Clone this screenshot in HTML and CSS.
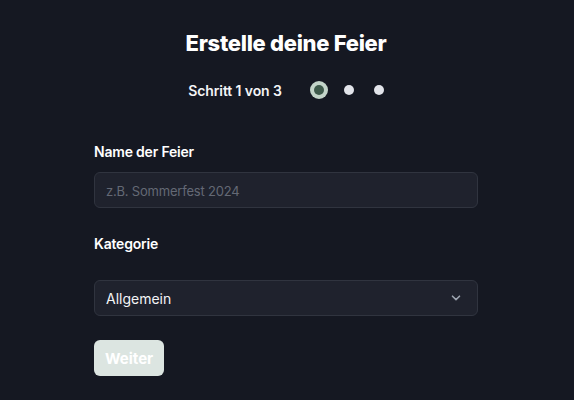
FILE: index.html
```html
<!DOCTYPE html>
<html lang="de">
<head>
  <meta charset="UTF-8" />
  <title>Erstelle deine Feier</title>
  <link rel="stylesheet" href="styles.css">
</head>
<body>

<div class="wizard">
  <h1>Erstelle deine Feier</h1>

  <div class="steps">
    <span class="step-text">Schritt 1 von 3</span>
    <div class="dots">
      <span class="dot active"></span>
      <span class="dot"></span>
      <span class="dot"></span>
    </div>
  </div>

  <div class="form">
    <label for="name">Name der Feier</label>
    <input type="text" id="name" placeholder="z.B. Sommerfest 2024">

    <label for="kategorie" class="label-select">Kategorie</label>
    <div class="select-wrap">
      <select id="kategorie">
        <option>Allgemein</option>
        <option>Geburtstag</option>
        <option>Hochzeit</option>
      </select>
      <svg class="chevron" width="10" height="6" viewBox="0 0 10 6">
        <path d="M1.5 1.2 L5 4.6 L8.5 1.2" fill="none" stroke="#9ca3af" stroke-width="1.6" stroke-linecap="round" stroke-linejoin="round"/>
      </svg>
    </div>

    <button class="next">Weiter</button>
  </div>
</div>

</body>
</html>
```

FILE: styles.css
```css
body {
  margin: 0;
  padding-right: 2px;
  background-color: #151822;
  font-family: Inter, "Noto Sans", sans-serif;
  color: #f3f4f6;
}

.wizard {
  width: 384px;
  margin: 0 auto;
  padding-top: 29px;
}

h1 {
  margin: 0;
  text-align: center;
  font-size: 22px;
  line-height: 28px;
  font-weight: 800;
  letter-spacing: -0.3px;
  color: #ffffff;
}

.steps {
  display: flex;
  justify-content: center;
  align-items: center;
  gap: 32px;
  margin-top: 23px;
  height: 20px;
}

.step-text {
  font-size: 14px;
  font-weight: 600;
  letter-spacing: -0.1px;
  color: #f3f4f6;
}

.dots {
  display: flex;
  align-items: center;
  gap: 20px;
}

.dot {
  width: 10px;
  height: 10px;
  border-radius: 50%;
  background: #e2e4ea;
}

.dot.active {
  background: #3e5a4b;
  box-shadow: 0 0 0 4px #c3d4c9;
}

.form {
  margin-top: 42px;
  display: flex;
  flex-direction: column;
}

label {
  font-size: 14px;
  line-height: 20px;
  font-weight: 600;
  letter-spacing: -0.2px;
  color: #ffffff;
}

input, select {
  box-sizing: border-box;
  width: 100%;
  height: 36px;
  margin-top: 10px;
  padding: 0 11px;
  background: #1f222d;
  border: 1px solid #30343f;
  border-radius: 6px;
  font-family: Inter, "Noto Sans", sans-serif;
  font-size: 14px;
  color: #f3f4f6;
  outline: none;
}

input::placeholder {
  color: #646975;
  font-size: 13px;
  letter-spacing: -0.2px;
}

.label-select {
  margin-top: 26px;
}

.select-wrap {
  position: relative;
  margin-top: 26px;
}

.select-wrap select {
  margin-top: 0;
  appearance: none;
}

.chevron {
  position: absolute;
  right: 17px;
  top: 15px;
}

.next {
  align-self: flex-start;
  margin-top: 24px;
  height: 36px;
  padding: 0 11px;
  background: #dce5e1;
  color: #ffffff;
  border: none;
  border-radius: 6px;
  font-family: Inter, "Noto Sans", sans-serif;
  font-size: 15px;
  font-weight: 700;
  cursor: pointer;
}
```
